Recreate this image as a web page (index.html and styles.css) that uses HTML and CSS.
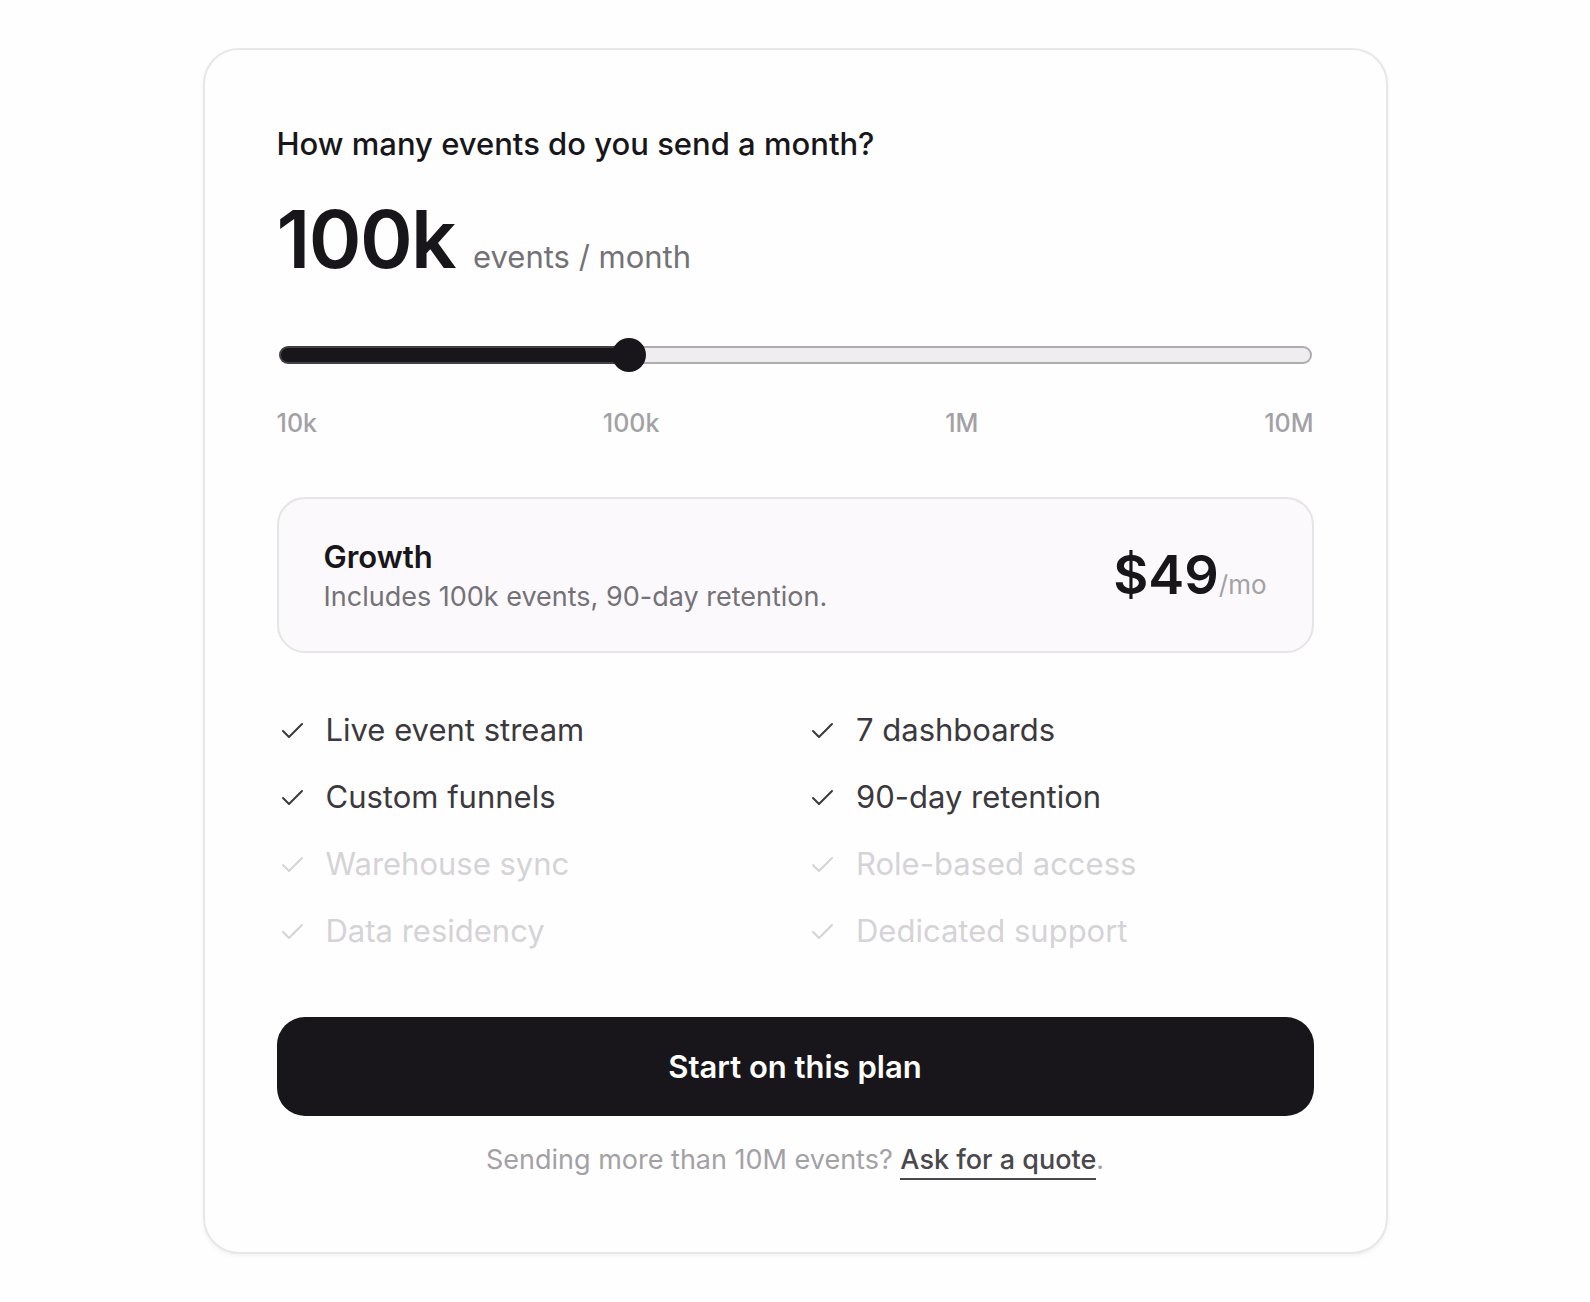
FILE: index.html
```html
<!DOCTYPE html>
<html lang="en">
<head>
  <meta charset="utf-8">
  <meta name="viewport" content="width=device-width, initial-scale=1">
  <title>Pricing</title>
  <link rel="stylesheet" href="styles.css">
</head>
<body>
  <svg class="sprite" aria-hidden="true">
    <symbol id="check" viewBox="0 0 30 30">
      <path d="M6 16l6 6L25 9" fill="none" stroke="currentColor" stroke-width="2" stroke-linecap="round" stroke-linejoin="round"/>
    </symbol>
  </svg>
  <main class="card">
    <label class="question" for="events">How many events do you send a month?</label>
    <p class="volume"><output class="volume-value" for="events">100k</output><span class="volume-unit">events / month</span></p>
    <input class="slider" style="--fill: 33.3%" type="range" id="events" min="0" max="300" value="100">
    <div class="ticks"><span>10k</span><span>100k</span><span>1M</span><span>10M</span></div>

    <section class="plan">
      <div>
        <h2 class="plan-name">Growth</h2>
        <p class="plan-detail">Includes 100k events, 90-day retention.</p>
      </div>
      <p class="price">$49<span class="price-unit">/mo</span></p>
    </section>

    <ul class="features">
      <li class="feature"><svg class="icon"><use href="#check"/></svg>Live event stream</li>
      <li class="feature"><svg class="icon"><use href="#check"/></svg>7 dashboards</li>
      <li class="feature"><svg class="icon"><use href="#check"/></svg>Custom funnels</li>
      <li class="feature"><svg class="icon"><use href="#check"/></svg>90-day retention</li>
      <li class="feature feature-off"><svg class="icon"><use href="#check"/></svg>Warehouse sync</li>
      <li class="feature feature-off"><svg class="icon"><use href="#check"/></svg>Role-based access</li>
      <li class="feature feature-off"><svg class="icon"><use href="#check"/></svg>Data residency</li>
      <li class="feature feature-off"><svg class="icon"><use href="#check"/></svg>Dedicated support</li>
    </ul>

    <button class="start" type="button">Start on this plan</button>
    <p class="note">Sending more than 10M events? <a class="quote" href="#quote">Ask for a quote</a>.</p>
  </main>
</body>
</html>
```
FILE: styles.css
```css
* {
  box-sizing: border-box;
}

body {
  margin: 0;
  padding: 48px 24px;
  background: #fefefe;
  color: #18161a;
  font-family: Inter, "Liberation Sans", sans-serif;
  font-size: 31px;
  line-height: 44px;
}

p,
h2,
ul {
  margin: 0;
  padding: 0;
}

.sprite {
  display: none;
}

.card {
  display: flex;
  flex-direction: column;
  max-width: 1185px;
  margin: 0 auto;
  padding: 72px;
  border: 2px solid #e8e6ea;
  border-radius: 36px;
  background: #fefefe;
  box-shadow: 0 2px 4px rgba(24, 22, 26, 0.05);
}

.question {
  font-weight: 500;
}

.volume {
  display: flex;
  align-items: baseline;
  gap: 18px;
  margin-top: 33px;
}

.volume-value {
  font-size: 80px;
  font-weight: 600;
  letter-spacing: -0.02em;
  line-height: 80px;
}

.volume-unit {
  color: #747276;
}

.slider {
  appearance: none;
  height: 34px;
  margin: 59px 2px 0;
  background: transparent;
}

.slider::-webkit-slider-runnable-track {
  height: 18px;
  border: 2px solid transparent;
  border-radius: 9px;
  background:
    linear-gradient(to right, #18161a var(--fill), #efedf0 var(--fill)) padding-box,
    linear-gradient(to right, #434145 var(--fill), #aeacaf var(--fill)) border-box;
}

.slider::-webkit-slider-thumb {
  appearance: none;
  width: 34px;
  height: 34px;
  margin-top: -10px;
  border-radius: 50%;
  background: #18161a;
}

.ticks {
  display: flex;
  justify-content: space-between;
  margin-top: 34px;
  color: #a3a1a5;
  font-size: 25px;
  font-weight: 500;
  line-height: 34px;
}

.plan {
  display: flex;
  align-items: center;
  justify-content: space-between;
  gap: 24px;
  margin-top: 57px;
  padding: 36px 45px;
  border: 2px solid #e6e4e8;
  border-radius: 28px;
  background: #fbf9fc;
}

.plan-name {
  font-size: 31px;
  font-weight: 600;
}

.plan-detail {
  color: #747276;
  font-size: 27px;
  line-height: 36px;
}

.price {
  font-size: 54px;
  font-weight: 600;
  line-height: 80px;
  white-space: nowrap;
}

.price-unit {
  color: #a3a1a5;
  font-size: 26px;
  font-weight: 400;
  line-height: 36px;
}

.features {
  display: grid;
  grid-template-columns: 1fr 1fr;
  gap: 22px 24px;
  margin-top: 54px;
  line-height: 45px;
  list-style: none;
}

.feature {
  display: flex;
  align-items: center;
  gap: 19px;
  color: #3b393d;
}

.feature-off {
  color: #d5d3d7;
}

.icon {
  flex: none;
  width: 30px;
  height: 30px;
}

.start {
  height: 99px;
  margin-top: 64px;
  border: 0;
  border-radius: 28px;
  background: #18161a;
  color: #fefefe;
  font: inherit;
  font-weight: 600;
}

.note {
  margin-top: 24px;
  color: #a3a1a5;
  font-size: 27px;
  line-height: 40px;
  text-align: center;
}

.quote {
  padding-bottom: 2px;
  border-bottom: 2px solid #4a484c;
  color: #4a484c;
  font-weight: 500;
  text-decoration: none;
}
```
